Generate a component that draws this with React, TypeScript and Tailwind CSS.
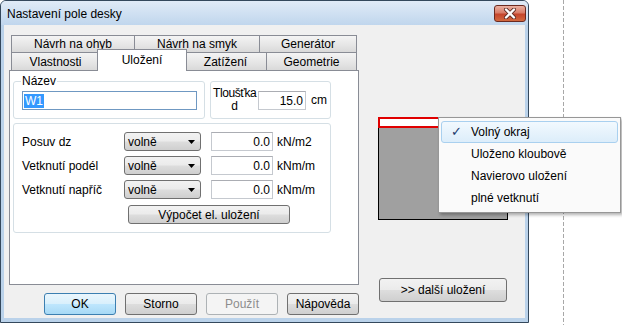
import React from "react";

const grad =
  "bg-[linear-gradient(#f2f2f2_0%,#ebebeb_48%,#dddddd_52%,#cfcfcf_100%)]";

function Tab({ label, className }: { label: string; className: string }) {
  return (
    <div
      className={
        "flex items-center justify-center border border-b-0 border-[#898c95] bg-[linear-gradient(#f4f4f4,#e6e6e6_55%,#d9d9d9)] text-[12px] leading-[14px] " +
        className
      }
    >
      {label}
    </div>
  );
}

function Select() {
  return (
    <div
      className={
        "flex h-[19px] w-[77px] items-center justify-between rounded-[3px] border border-[#707070] pl-[3px] pr-[5px] " +
        grad
      }
    >
      <span>volně</span>
      <svg width="7" height="4" viewBox="0 0 7 4">
        <path d="M0 0 H7 L3.5 4 Z" fill="#000" />
      </svg>
    </div>
  );
}

function Row({ label, unit }: { label: string; unit: string }) {
  return (
    <div className="flex h-[19px] items-center">
      <span className="w-[102px]">{label}</span>
      <Select />
      <div className="ml-[10px] flex h-[19px] w-[62px] items-center justify-end border border-[#c5c9cf] border-t-[#abadb3] bg-white pr-[2px]">
        0.0
      </div>
      <span className="ml-[4px]">{unit}</span>
    </div>
  );
}

function Btn({ label, className = "" }: { label: string; className?: string }) {
  return (
    <div
      className={
        "flex items-center justify-center rounded-[3px] border border-[#707070] " +
        grad +
        " " +
        className
      }
    >
      {label}
    </div>
  );
}

export default function App() {
  return (
    <div className="relative h-[325px] w-[622px] overflow-hidden bg-white font-['Liberation_Sans',Arial,sans-serif] text-[12px] leading-[14px] text-black">
      <svg className="absolute left-[563px] top-0" width="1" height="325">
        <line x1="0.5" y1="0" x2="0.5" y2="325" stroke="#a8a8a8" strokeDasharray="4 2" />
      </svg>

      {/* window */}
      <div className="absolute left-0 top-0 flex h-[323px] w-[529px] flex-col rounded-t-[6px] border border-[#34485c] bg-[#bad2ea]">
        <div className="flex h-[24px] shrink-0 items-center justify-between rounded-t-[5px] bg-[linear-gradient(#e0ebf7,#c0d6ed)] pl-[6px] pr-[2px]">
          <span className="mt-[2px]">Nastavení pole desky</span>
          <div className="mt-[1px] flex h-[17px] w-[32px] items-center justify-center rounded-[3px] border border-[#6b2a20] bg-[linear-gradient(#eab0a2_0%,#d97d68_45%,#c5452c_55%,#d2693f_100%)]">
            <svg width="14" height="11" viewBox="0 0 14 11">
              <path d="M3 1.5 L11 9.5 M11 1.5 L3 9.5" stroke="#5a2a22" strokeWidth="4" strokeLinecap="round" />
              <path d="M3 1.5 L11 9.5 M11 1.5 L3 9.5" stroke="#ffffff" strokeWidth="2.4" strokeLinecap="round" />
            </svg>
          </div>
        </div>

        <div className="mx-[3px] mb-[4px] flex flex-1 bg-[#f0f0f0]">
          {/* left column */}
          <div className="flex w-[355px] shrink-0 flex-col pl-[5px] pt-[10px]">
            <div className="ml-[2px] flex h-[17px]">
              <Tab label="Návrh na ohyb" className="h-[17px] w-[124px]" />
              <Tab label="Návrh na smyk" className="-ml-[1px] h-[17px] w-[126px]" />
              <Tab label="Generátor" className="-ml-[1px] h-[17px] w-[98px]" />
            </div>
            <div className="ml-[2px] flex h-[18px] items-end">
              <Tab label="Vlastnosti" className="h-[18px] w-[89px]" />
              <div className="relative z-10 -mb-[1px] -ml-[3px] flex h-[22px] w-[90px] items-center justify-center border border-b-0 border-[#898c95] bg-white pb-[2px]">
                Uložení
              </div>
              <Tab label="Zatížení" className="-ml-[3px] h-[18px] w-[83px]" />
              <Tab label="Geometrie" className="-ml-[1px] h-[18px] w-[91px]" />
            </div>

            <div className="flex h-[215px] w-[350px] flex-col border border-[#898c95] bg-white pl-[3px]">
              <div className="mt-[10px] flex">
                <div className="relative h-[38px] w-[192px] rounded-[3px] border border-[#d5dfe5] pl-[8px] pt-[9px]">
                  <span className="absolute -top-[8px] left-[7px] bg-white px-[1px]">Název</span>
                  <div className="flex h-[19px] w-[175px] items-center border border-[#6f98c2] bg-white pl-[1px]">
                    <span className="h-[14px] bg-[#3399ff] px-[1px] text-white">W1</span>
                  </div>
                </div>
                <div className="ml-[5px] flex h-[38px] w-[121px] items-start rounded-[3px] border border-[#d5dfe5] pl-[2px] pt-[5px]">
                  <span className="w-[43px] text-center leading-[13px] tracking-[-0.4px]">
                    Tloušťka
                    <br />d
                  </span>
                  <div className="ml-[2px] mt-[4px] flex h-[19px] w-[48px] items-center justify-end border border-[#c5c9cf] border-t-[#abadb3] bg-white pr-[2px]">
                    15.0
                  </div>
                  <span className="ml-[5px] mt-[6px]">cm</span>
                </div>
              </div>

              <div className="mt-[4px] flex h-[110px] w-[318px] flex-col rounded-[3px] border border-[#d5dfe5] pl-[8px] pt-[8px]">
                <div className="flex flex-col gap-[5px]">
                  <Row label="Posuv dz" unit="kN/m2" />
                  <Row label="Vetknutí podél" unit="kNm/m" />
                  <Row label="Vetknutí napříč" unit="kNm/m" />
                </div>
                <Btn label="Výpočet el. uložení" className="ml-[106px] mt-[6px] h-[19px] w-[162px]" />
              </div>
            </div>

            <div className="mt-[8px] flex gap-[9px] pl-[35px]">
              <div className="flex h-[22px] w-[72px] items-center justify-center rounded-[3px] border border-[#3c7fb1] bg-[linear-gradient(#eaf6fd_0%,#d9f0fc_48%,#bee6fd_52%,#a7d9f5_100%)]">
                OK
              </div>
              <Btn label="Storno" className="h-[22px] w-[72px]" />
              <div className="flex h-[22px] w-[72px] items-center justify-center rounded-[3px] border border-[#adb2b5] bg-[#f4f4f4] text-[#8d8d8d]">
                Použít
              </div>
              <Btn label="Nápověda" className="h-[22px] w-[72px]" />
            </div>
          </div>

          {/* right column */}
          <div className="ml-[19px] flex w-[130px] flex-col pt-[92px]">
            <div className="h-[11px] border-2 border-[#e00000] bg-white" />
            <div className="h-[92px] border border-t-0 border-black bg-[#a0a0a0]" />
            <Btn label=">> další uložení" className="ml-[1px] mt-[58px] h-[24px] w-[128px]" />
          </div>
        </div>
      </div>

      {/* popup menu */}
      <div className="absolute left-[438px] top-[117px] w-[183px] border border-[#979797] bg-[#fafafa] py-[3px] shadow-[2px_2px_3px_rgba(0,0,0,0.3)]">
        <div className="mx-[2px] flex h-[22px] items-center rounded-[3px] border border-[#a9d0ef] bg-[linear-gradient(#f2f9fe,#dcedfa)]">
          <span className="flex w-[29px] justify-center font-['DejaVu_Sans',sans-serif] text-[13px] text-[#1d3a6d]">✓</span>
          <span>Volný okraj</span>
        </div>
        <div className="mx-[2px] flex h-[22px] items-center pl-[30px]">Uloženo kloubově</div>
        <div className="mx-[2px] flex h-[22px] items-center pl-[30px]">Navierovo uložení</div>
        <div className="mx-[2px] flex h-[22px] items-center pl-[30px]">plné vetknutí</div>
      </div>
    </div>
  );
}
